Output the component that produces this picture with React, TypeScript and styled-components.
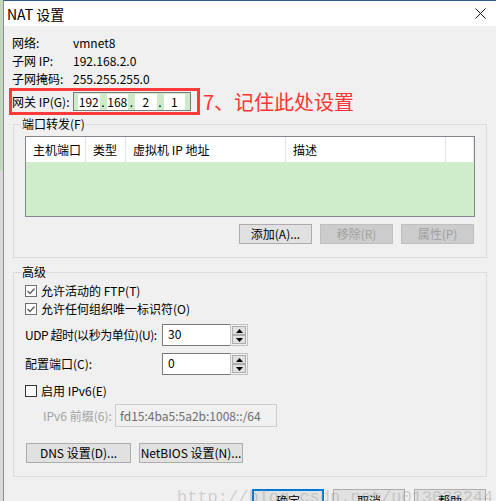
import React from "react"
import styled, { createGlobalStyle } from "styled-components"

const uiFont = `"Noto Sans CJK SC", "Noto Sans", sans-serif`

const GlobalStyle = createGlobalStyle`
    html, body {
        margin: 0;
        padding: 0;
    }
    body {
        background: #f0f0f0;
        overflow: hidden;
        font-family: ${uiFont};
        font-size: 12px;
        color: #000;
    }
`

const Screen = styled.div`
    position: relative;
    display: flex;
    width: 496px;
    height: 501px;
    overflow: hidden;
`

const DesktopEdge = styled.div`
    width: 3px;
    flex-shrink: 0;
    background: linear-gradient(to bottom, #c3d6c0 0, #c3d6c0 170px, #d9d9d9 170px);
`

const Window = styled.div`
    flex: 1;
    min-width: 0;
    display: flex;
    flex-direction: column;
    background: #f0f0f0;
    border-top: 1px solid #2b5b89;
    border-left: 1px solid #8d8d8d;
`

const TitleBar = styled.div`
    height: 25px;
    flex-shrink: 0;
    display: flex;
    align-items: center;
    justify-content: space-between;
    padding: 0 10px 0 3px;
    background: #fff;
`

const Title = styled.span`
    font-size: 14px;
    line-height: 20px;
`

const Body = styled.div`
    padding: 8px 0 0 8px;
`

const InfoGrid = styled.div`
    display: grid;
    grid-template-columns: 61px auto;
    grid-auto-rows: 18px;
    align-items: center;
    line-height: 16px;
`

const GatewayRow = styled.div`
    display: flex;
    align-items: center;
    margin-left: -3px;
`

const RedBox = styled.div`
    display: flex;
    align-items: center;
    height: 27px;
    box-sizing: border-box;
    border: 3px solid #ff3a3a;
    padding-right: 6px;
`

const FieldLabel = styled.span<{ $w: number; $dim?: boolean; $tight?: boolean }>`
    width: ${(p) => p.$w}px;
    flex-shrink: 0;
    white-space: nowrap;
    line-height: 16px;
    letter-spacing: ${(p) => (p.$tight ? "-0.45px" : "0")};
    color: ${(p) => (p.$dim ? "#a3a3a3" : "#000")};
`

const IpField = styled.div`
    width: 118px;
    height: 19px;
    box-sizing: border-box;
    display: flex;
    align-items: center;
    padding: 0 5px 0 4px;
    border: 1px solid #7a7a7a;
    background: #cdebc9;
`

const IpPart = styled.span`
    flex: 1;
    height: 16px;
    background: #fff;
    text-align: center;
    line-height: 16px;
`

const IpDot = styled.span`
    width: 7px;
    text-align: center;
    line-height: 16px;
`

const Annotation = styled.span`
    margin-left: 3px;
    font-size: 20px;
    line-height: 27px;
    color: #ff3535;
`

const Group = styled.fieldset<{ $top: number }>`
    margin: ${(p) => p.$top}px 0 0 1px;
    padding: 0;
    width: 474px;
    min-width: 0;
    box-sizing: border-box;
    border: 1px solid #dcdcdc;
`

const GroupTitle = styled.legend`
    margin-left: 7px;
    padding: 0 1px;
    line-height: 16px;
`

const GroupBody = styled.div<{ $top: number }>`
    display: flex;
    flex-direction: column;
    padding: ${(p) => p.$top}px 11px 13px 11px;
`

const ListView = styled.div`
    border: 1px solid #828790;
    background: #cfedcb;
`

const ListHeader = styled.div`
    display: grid;
    grid-template-columns: 60px 40px 160px 160px 1fr;
    height: 25px;
    background: #fff;
`

const HeaderCell = styled.div`
    box-sizing: border-box;
    padding-left: 7px;
    border-right: 1px solid #e5e5e5;
    line-height: 26px;
    white-space: nowrap;
`

const ListBody = styled.div`
    height: 54px;
`

const ButtonRow = styled.div<{ $top: number; $align: "start" | "end" }>`
    display: flex;
    justify-content: ${(p) => (p.$align === "end" ? "flex-end" : "flex-start")};
    gap: 8px;
    margin-top: ${(p) => p.$top}px;
    padding: 0 1px;
`

const Button = styled.button<{ $w: number; $h?: number; $primary?: boolean }>`
    width: ${(p) => p.$w}px;
    height: ${(p) => p.$h ?? 20}px;
    box-sizing: border-box;
    padding: 0;
    font-family: ${uiFont};
    font-size: 12px;
    line-height: 16px;
    color: #000;
    background: #e1e1e1;
    border: ${(p) => (p.$primary ? "2px solid #0078d7" : "1px solid #adadad")};
    white-space: nowrap;

    &:disabled {
        background: #cccccc;
        border-color: #bfbfbf;
        color: #a0a0a0;
    }
`

const CheckRow = styled.label<{ $top: number }>`
    display: flex;
    align-items: center;
    gap: 4px;
    height: 18px;
    margin-top: ${(p) => p.$top}px;
    line-height: 16px;
`

const CheckBox = styled.span<{ $checked?: boolean }>`
    width: 12px;
    height: 12px;
    box-sizing: border-box;
    display: flex;
    align-items: center;
    justify-content: center;
    border: 1px solid ${(p) => (p.$checked ? "#6f6f6f" : "#333")};
    background: #fff;
`

const FormRow = styled.div<{ $top: number; $indent?: number }>`
    display: flex;
    align-items: center;
    margin-top: ${(p) => p.$top}px;
    padding-left: ${(p) => p.$indent ?? 0}px;
`

const SpinBox = styled.div`
    display: flex;
    height: 22px;
    width: 86px;
`

const SpinInput = styled.div`
    flex: 1;
    box-sizing: border-box;
    padding: 1px 0 0 5px;
    line-height: 16px;
    background: #fff;
    border: 1px solid #7a7a7a;
    border-right: none;
`

const SpinButtons = styled.div`
    width: 18px;
    box-sizing: border-box;
    display: flex;
    flex-direction: column;
    justify-content: space-between;
    padding: 1px;
    border: 1px solid #c3c3c3;
    background: #f0f0f0;
`

const SpinButton = styled.div`
    height: 9px;
    box-sizing: border-box;
    display: flex;
    align-items: center;
    justify-content: center;
    background: #e1e1e1;
    border: 1px solid #adadad;
`

const PrefixField = styled.div`
    width: 162px;
    height: 23px;
    box-sizing: border-box;
    padding-left: 4px;
    line-height: 21px;
    color: #6d6d6d;
    background: #f0f0f0;
    border: 1px solid #cccccc;
`

const DialogButtons = styled.div`
    display: flex;
    justify-content: flex-end;
    gap: 9px;
    margin-top: 12px;
    padding-right: 10px;
`

const Watermark = styled.div`
    position: absolute;
    left: 177px;
    top: 488px;
    font-family: "Liberation Mono", monospace;
    font-size: 17px;
    line-height: 20px;
    color: rgba(150, 150, 150, 0.4);
    white-space: nowrap;
    pointer-events: none;
`

const CloseIcon = () => (
    <svg width="11" height="11" viewBox="0 0 11 11">
        <path d="M0.5 0.5 L10.5 10.5 M10.5 0.5 L0.5 10.5" stroke="#111" strokeWidth="1" />
    </svg>
)

const Tick = () => (
    <svg width="10" height="10" viewBox="0 0 10 10">
        <path d="M1.5 5 L4 7.5 L8.5 2.5" fill="none" stroke="#5c5c5c" strokeWidth="1.3" />
    </svg>
)

const Arrow = ({ up }: { up?: boolean }) => (
    <svg width="7" height="4" viewBox="0 0 7 4">
        <path d={up ? "M0 4 L3.5 0 L7 4 Z" : "M0 0 L7 0 L3.5 4 Z"} fill="#000" />
    </svg>
)

const Spinner = ({ value }: { value: string }) => (
    <SpinBox>
        <SpinInput>{value}</SpinInput>
        <SpinButtons>
            <SpinButton>
                <Arrow up />
            </SpinButton>
            <SpinButton>
                <Arrow />
            </SpinButton>
        </SpinButtons>
    </SpinBox>
)

const columns = ["主机端口", "类型", "虚拟机 IP 地址", "描述", ""]

const App: React.FC = () => {
    return (
        <Screen>
            <GlobalStyle />
            <DesktopEdge />
            <Window>
                <TitleBar>
                    <Title>NAT 设置</Title>
                    <CloseIcon />
                </TitleBar>

                <Body>
                    <InfoGrid>
                        <span>网络:</span>
                        <span>vmnet8</span>
                        <span>子网 IP:</span>
                        <span>192.168.2.0</span>
                        <span>子网掩码:</span>
                        <span>255.255.255.0</span>
                    </InfoGrid>

                    <GatewayRow>
                        <RedBox>
                            <FieldLabel $w={61}>网关 IP(G):</FieldLabel>
                            <IpField>
                                <IpPart>192</IpPart>
                                <IpDot>.</IpDot>
                                <IpPart>168</IpPart>
                                <IpDot>.</IpDot>
                                <IpPart>2</IpPart>
                                <IpDot>.</IpDot>
                                <IpPart>1</IpPart>
                            </IpField>
                        </RedBox>
                        <Annotation>7、记住此处设置</Annotation>
                    </GatewayRow>

                    <Group $top={1}>
                        <GroupTitle>端口转发(F)</GroupTitle>
                        <GroupBody $top={4}>
                            <ListView>
                                <ListHeader>
                                    {columns.map((c, i) => (
                                        <HeaderCell key={i}>{c}</HeaderCell>
                                    ))}
                                </ListHeader>
                                <ListBody />
                            </ListView>
                            <ButtonRow $top={7} $align="end">
                                <Button $w={73}>添加(A)...</Button>
                                <Button $w={73} disabled>
                                    移除(R)
                                </Button>
                                <Button $w={73} disabled>
                                    属性(P)
                                </Button>
                            </ButtonRow>
                        </GroupBody>
                    </Group>

                    <Group $top={6}>
                        <GroupTitle>高级</GroupTitle>
                        <GroupBody $top={2}>
                            <CheckRow $top={0}>
                                <CheckBox $checked>
                                    <Tick />
                                </CheckBox>
                                允许活动的 FTP(T)
                            </CheckRow>
                            <CheckRow $top={0}>
                                <CheckBox $checked>
                                    <Tick />
                                </CheckBox>
                                允许任何组织唯一标识符(O)
                            </CheckRow>
                            <FormRow $top={6}>
                                <FieldLabel $w={137} $tight>
                                    UDP 超时(以秒为单位)(U):
                                </FieldLabel>
                                <Spinner value="30" />
                            </FormRow>
                            <FormRow $top={7}>
                                <FieldLabel $w={137}>配置端口(C):</FieldLabel>
                                <Spinner value="0" />
                            </FormRow>
                            <CheckRow $top={7}>
                                <CheckBox />
                                启用 IPv6(E)
                            </CheckRow>
                            <FormRow $top={4} $indent={18}>
                                <FieldLabel $w={72} $dim>
                                    IPv6 前缀(6):
                                </FieldLabel>
                                <PrefixField>fd15:4ba5:5a2b:1008::/64</PrefixField>
                            </FormRow>
                            <ButtonRow $top={16} $align="start">
                                <Button $w={105}>DNS 设置(D)...</Button>
                                <Button $w={104}>NetBIOS 设置(N)...</Button>
                            </ButtonRow>
                        </GroupBody>
                    </Group>

                    <DialogButtons>
                        <Button $w={72} $h={23} $primary>
                            确定
                        </Button>
                        <Button $w={72} $h={23}>
                            取消
                        </Button>
                        <Button $w={72} $h={23}>
                            帮助
                        </Button>
                    </DialogButtons>
                </Body>
            </Window>
            <Watermark>http://blog.csdn.net/u013032244</Watermark>
        </Screen>
    )
}

export default App
